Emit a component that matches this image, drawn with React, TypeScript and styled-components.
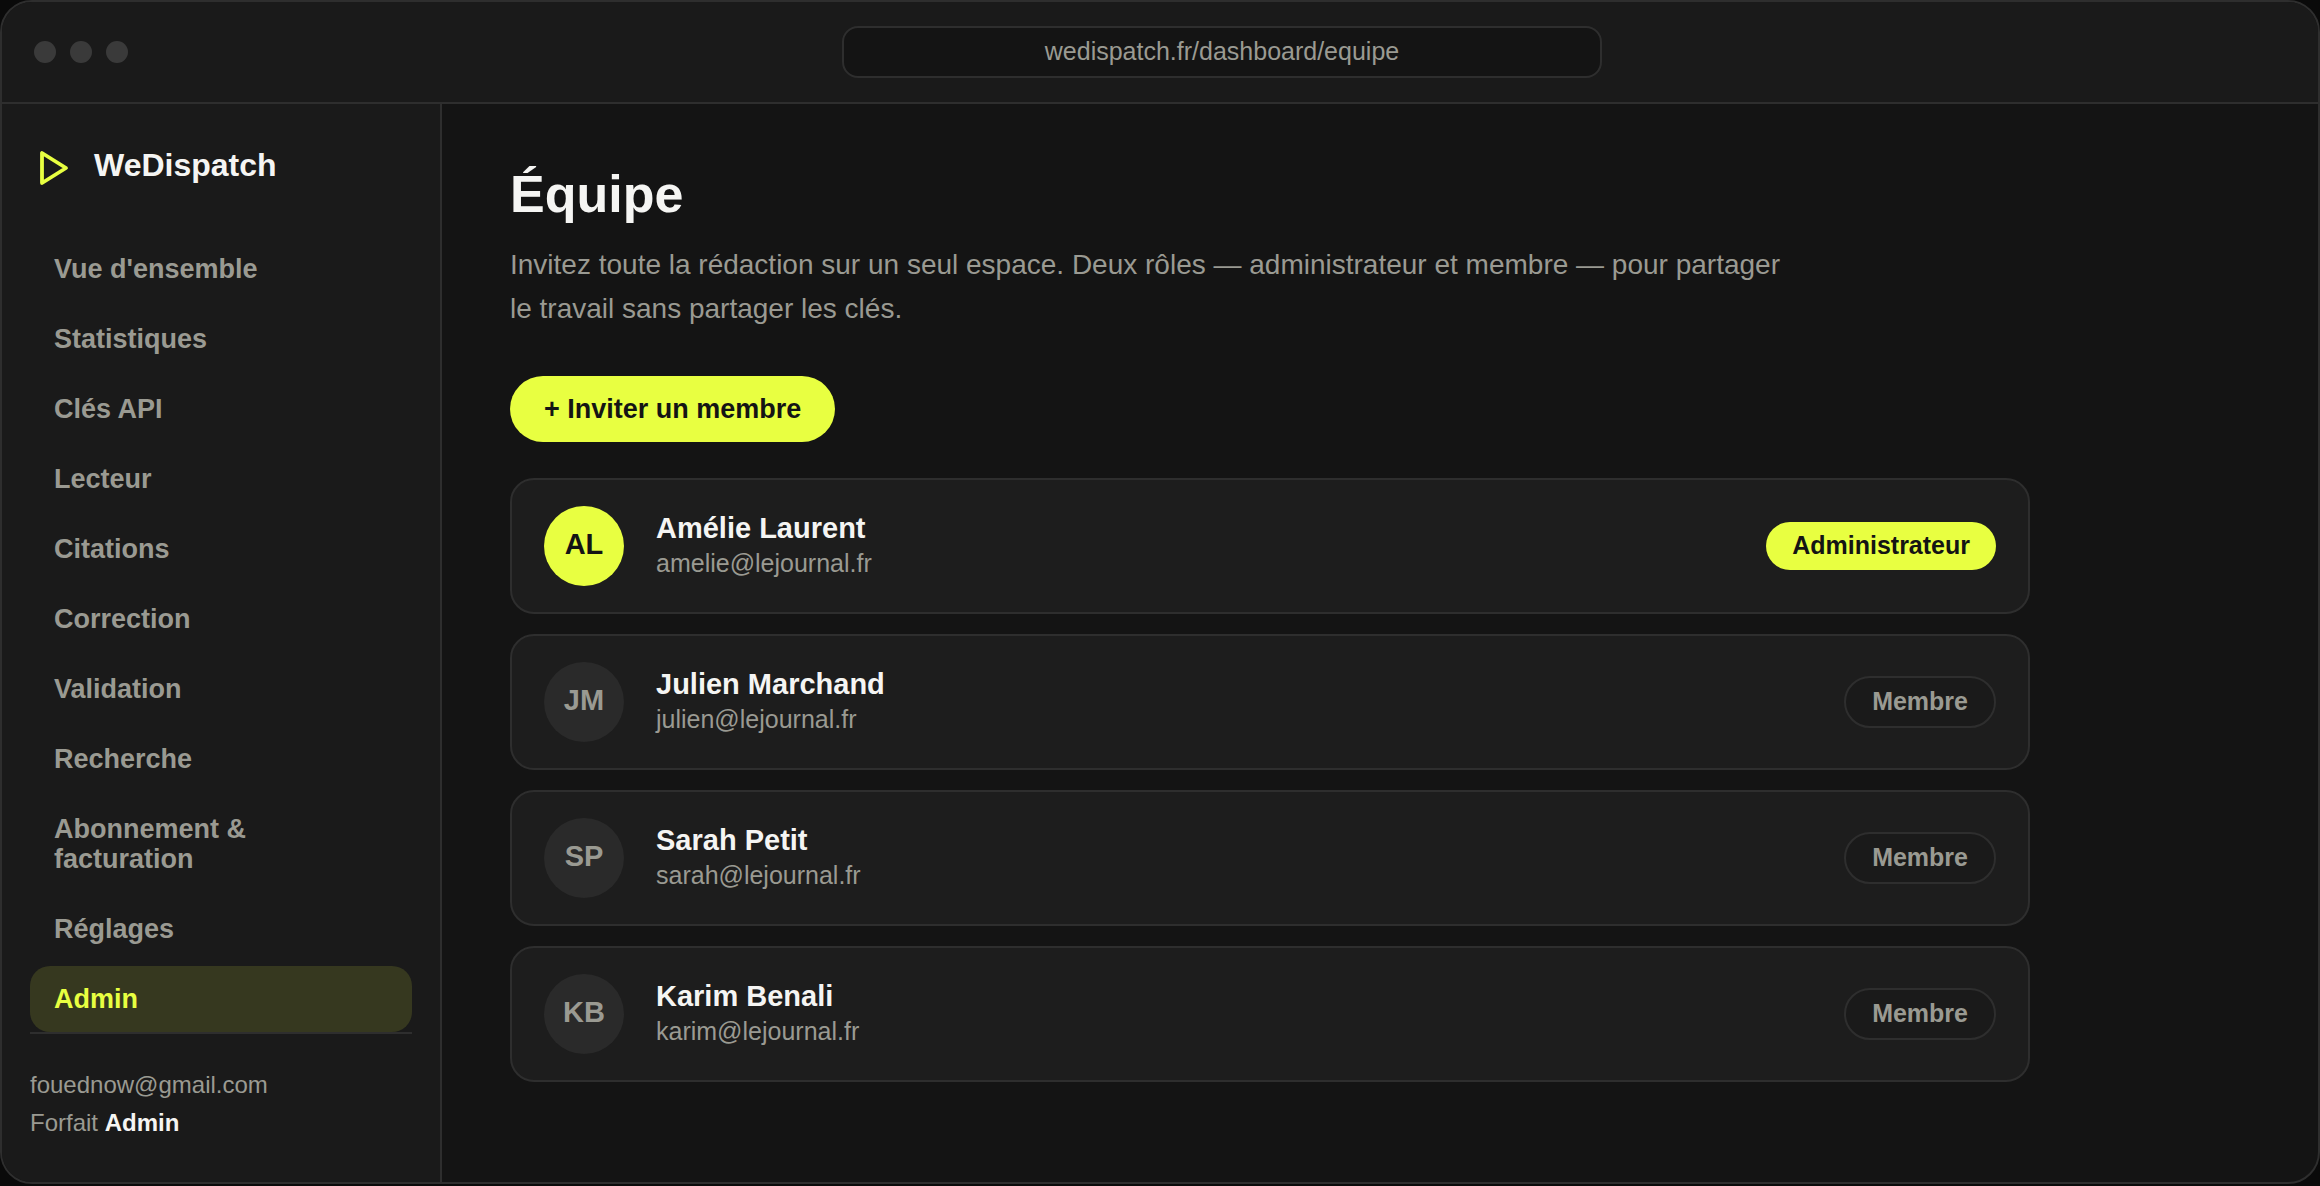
import React from 'react';
import styled, { createGlobalStyle } from 'styled-components';

const color = {
  page: '#0a0a0a',
  main: '#141414',
  panel: '#1a1a1a',
  card: '#1d1d1d',
  line: '#2e2e2e',
  dot: '#3a3a3a',
  avatar: '#2a2a2a',
  text: '#f5f5f3',
  muted: '#9a9a92',
  accent: '#e8ff41',
  accentSoft: '#36381f',
  ink: '#141414',
};

const GlobalStyle = createGlobalStyle`
  *, *::before, *::after { box-sizing: border-box; }
  body {
    margin: 0;
    background: ${color.page};
    color: ${color.text};
    font-family: "Liberation Sans", Arial, sans-serif;
  }
  h1, p, ul { margin: 0; padding: 0; }
  ul { list-style: none; }
`;

const Page = styled.div`
  min-height: 100vh;
  padding-bottom: 2px;
  display: flex;
`;

const Window = styled.div`
  flex: 1;
  display: flex;
  flex-direction: column;
  overflow: hidden;
  border: 2px solid ${color.line};
  border-radius: 32px;
  background: ${color.main};
`;

const TopBar = styled.header`
  display: flex;
  align-items: center;
  gap: 30px;
  padding: 24px 32px;
  background: ${color.panel};
  border-bottom: 2px solid ${color.line};
`;

const Dots = styled.div`
  display: flex;
  gap: 14px;
`;

const Dot = styled.span`
  width: 22px;
  height: 22px;
  border-radius: 50%;
  background: ${color.dot};
`;

const Address = styled.input`
  flex: 1;
  max-width: 760px;
  height: 52px;
  margin: 0 auto;
  padding: 0 24px 2px;
  border: 2px solid ${color.line};
  border-radius: 16px;
  background: ${color.main};
  color: ${color.muted};
  font: 25px "Liberation Sans", Arial, sans-serif;
  text-align: center;
  outline: none;
`;

const Body = styled.div`
  flex: 1;
  display: flex;
`;

const Sidebar = styled.aside`
  flex: none;
  width: 440px;
  display: flex;
  flex-direction: column;
  justify-content: space-between;
  padding: 36px 28px 40px;
  background: ${color.panel};
  border-right: 2px solid ${color.line};
`;

const Brand = styled.a`
  display: flex;
  align-items: center;
  gap: 16px;
  margin-bottom: 46px;
  color: ${color.text};
  font-size: 32px;
  font-weight: 700;
  line-height: 50px;
  text-decoration: none;
`;

const NavList = styled.ul`
  display: flex;
  flex-direction: column;
  gap: 4px;
`;

const NavLink = styled.a<{ $active?: boolean }>`
  display: block;
  padding: 18px 24px;
  border-radius: 20px;
  background: ${(p) => (p.$active ? color.accentSoft : 'transparent')};
  color: ${(p) => (p.$active ? color.accent : color.muted)};
  font-size: 27px;
  font-weight: 700;
  line-height: 30px;
  text-decoration: none;
`;

const Account = styled.footer`
  padding-top: 32px;
  border-top: 2px solid ${color.line};
  color: ${color.muted};
  font-size: 24px;
  line-height: 38px;

  strong { color: ${color.text}; }
`;

const Main = styled.main`
  flex: 1;
  min-width: 0;
  padding: 60px 68px;
`;

const Title = styled.h1`
  margin-bottom: 19px;
  font-size: 52px;
  line-height: 60px;
`;

const Lead = styled.p`
  max-width: 1280px;
  margin-bottom: 45px;
  color: ${color.muted};
  font-size: 28px;
  line-height: 44px;
`;

const InviteButton = styled.button`
  display: block;
  margin-bottom: 36px;
  padding: 18px 34px;
  border: 0;
  border-radius: 33px;
  background: ${color.accent};
  color: ${color.ink};
  font: 700 27px/30px "Liberation Sans", Arial, sans-serif;
  cursor: pointer;
`;

const Members = styled.ul`
  display: flex;
  flex-direction: column;
  gap: 20px;
  max-width: 1520px;
`;

const Member = styled.li`
  display: flex;
  align-items: center;
  gap: 32px;
  padding: 26px 32px;
  border: 2px solid ${color.line};
  border-radius: 24px;
  background: ${color.card};
`;

const Avatar = styled.span<{ $admin: boolean }>`
  flex: none;
  width: 80px;
  height: 80px;
  border-radius: 50%;
  background: ${(p) => (p.$admin ? color.accent : color.avatar)};
  color: ${(p) => (p.$admin ? color.ink : color.muted)};
  font-size: 29px;
  font-weight: 700;
  line-height: 76px;
  text-align: center;
`;

const Identity = styled.div`
  flex: 1;
  min-width: 0;
`;

const Name = styled.div`
  margin-bottom: 2px;
  font-size: 29px;
  font-weight: 700;
  line-height: 32px;
`;

const Email = styled.div`
  color: ${color.muted};
  font-size: 25px;
  line-height: 34px;
`;

const Role = styled.span<{ $admin: boolean }>`
  padding: 9px 26px 11px;
  border: ${(p) => (p.$admin ? '0' : `2px solid ${color.line}`)};
  border-radius: 26px;
  background: ${(p) => (p.$admin ? color.accent : color.panel)};
  color: ${(p) => (p.$admin ? color.ink : color.muted)};
  font-size: 25px;
  font-weight: 700;
  line-height: 28px;
`;

const navItems = [
  "Vue d'ensemble",
  'Statistiques',
  'Clés API',
  'Lecteur',
  'Citations',
  'Correction',
  'Validation',
  'Recherche',
  'Abonnement & facturation',
  'Réglages',
  'Admin',
];

const members = [
  { initials: 'AL', name: 'Amélie Laurent', email: 'amelie@lejournal.fr', admin: true },
  { initials: 'JM', name: 'Julien Marchand', email: 'julien@lejournal.fr', admin: false },
  { initials: 'SP', name: 'Sarah Petit', email: 'sarah@lejournal.fr', admin: false },
  { initials: 'KB', name: 'Karim Benali', email: 'karim@lejournal.fr', admin: false },
];

const Logo = () => (
  <svg width="48" height="48" viewBox="0 0 48 48" fill="none" aria-hidden="true">
    <path
      d="M12 12v30l24-15z"
      stroke={color.accent}
      strokeWidth="3.8"
      strokeLinejoin="round"
    />
  </svg>
);

export default function App() {
  return (
    <>
      <GlobalStyle />
      <Page>
        <Window>
          <TopBar>
            <Dots>
              <Dot />
              <Dot />
              <Dot />
            </Dots>
            <Address aria-label="Adresse" readOnly value="wedispatch.fr/dashboard/equipe" />
          </TopBar>
          <Body>
            <Sidebar>
              <nav>
                <Brand href="#">
                  <Logo />
                  WeDispatch
                </Brand>
                <NavList>
                  {navItems.map((label) => (
                    <li key={label}>
                      <NavLink href="#" $active={label === 'Admin'}>
                        {label}
                      </NavLink>
                    </li>
                  ))}
                </NavList>
              </nav>
              <Account>
                <div>fouednow@gmail.com</div>
                <div>
                  Forfait <strong>Admin</strong>
                </div>
              </Account>
            </Sidebar>
            <Main>
              <Title>Équipe</Title>
              <Lead>
                Invitez toute la rédaction sur un seul espace. Deux rôles — administrateur et membre —
                pour partager le travail sans partager les clés.
              </Lead>
              <InviteButton type="button">+ Inviter un membre</InviteButton>
              <Members>
                {members.map((m) => (
                  <Member key={m.email}>
                    <Avatar $admin={m.admin}>{m.initials}</Avatar>
                    <Identity>
                      <Name>{m.name}</Name>
                      <Email>{m.email}</Email>
                    </Identity>
                    <Role $admin={m.admin}>{m.admin ? 'Administrateur' : 'Membre'}</Role>
                  </Member>
                ))}
              </Members>
            </Main>
          </Body>
        </Window>
      </Page>
    </>
  );
}
